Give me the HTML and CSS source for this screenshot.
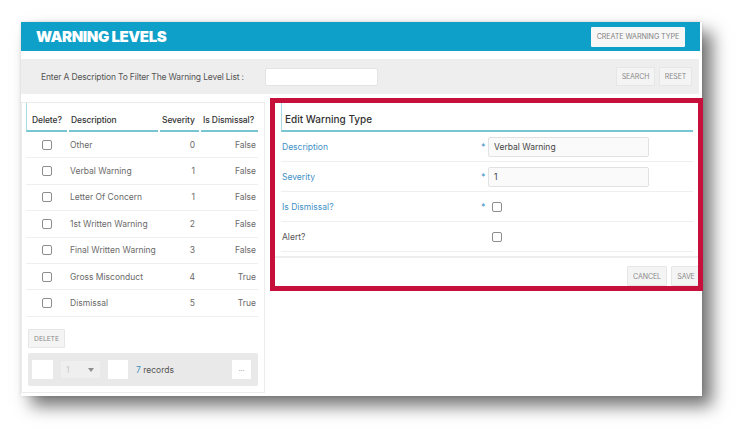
FILE: index.html
```html
<!DOCTYPE html>
<html lang="en">
<head>
<meta charset="utf-8">
<title>Warning Levels</title>
<link rel="stylesheet" href="styles.css">
</head>
<body>
<div class="card">
  <header class="topbar">
    <h1 class="title">WARNING LEVELS</h1>
    <button class="btn btn-create">CREATE WARNING TYPE</button>
  </header>

  <div class="filter">
    <label class="filter-label">Enter A Description To Filter The Warning Level List :</label>
    <input class="filter-input" type="text">
    <div class="filter-actions">
      <button class="btn btn-search">SEARCH</button>
      <button class="btn btn-reset">RESET</button>
    </div>
  </div>

  <div class="main">
    <section class="list-panel">
      <div class="grid">
        <div class="th th-first">Delete?</div>
        <div class="th">Description</div>
        <div class="th">Severity</div>
        <div class="th">Is Dismissal?</div>

        <div class="td td-cb"><input type="checkbox" class="cb"></div>
        <div class="td td-desc">Other</div>
        <div class="td td-num">0</div>
        <div class="td td-bool">False</div>

        <div class="td td-cb"><input type="checkbox" class="cb"></div>
        <div class="td td-desc">Verbal Warning</div>
        <div class="td td-num">1</div>
        <div class="td td-bool">False</div>

        <div class="td td-cb"><input type="checkbox" class="cb"></div>
        <div class="td td-desc">Letter Of Concern</div>
        <div class="td td-num">1</div>
        <div class="td td-bool">False</div>

        <div class="td td-cb"><input type="checkbox" class="cb"></div>
        <div class="td td-desc">1st Written Warning</div>
        <div class="td td-num">2</div>
        <div class="td td-bool">False</div>

        <div class="td td-cb"><input type="checkbox" class="cb"></div>
        <div class="td td-desc">Final Written Warning</div>
        <div class="td td-num">3</div>
        <div class="td td-bool">False</div>

        <div class="td td-cb"><input type="checkbox" class="cb"></div>
        <div class="td td-desc">Gross Misconduct</div>
        <div class="td td-num">4</div>
        <div class="td td-bool">True</div>

        <div class="td td-cb"><input type="checkbox" class="cb"></div>
        <div class="td td-desc">Dismissal</div>
        <div class="td td-num">5</div>
        <div class="td td-bool">True</div>
      </div>

      <button class="btn btn-delete">DELETE</button>

      <div class="pager">
        <span class="pg-box"></span>
        <span class="pg-select"><span class="pg-val">1</span><span class="pg-arrow"></span></span>
        <span class="pg-box pg-box2"></span>
        <span class="pg-count"><span class="pg-num">7</span> records</span>
        <span class="pg-more">...</span>
      </div>
    </section>

    <section class="edit-panel">
      <div class="edit-title">Edit Warning Type</div>
      <div class="form-row">
        <span class="f-label f-req">Description</span>
        <span class="f-star">*</span>
        <span class="f-ctrl"><input class="f-input" type="text" value="Verbal Warning"></span>
      </div>
      <div class="form-row">
        <span class="f-label f-req">Severity</span>
        <span class="f-star">*</span>
        <span class="f-ctrl"><input class="f-input" type="text" value="1"></span>
      </div>
      <div class="form-row">
        <span class="f-label f-req">Is Dismissal?</span>
        <span class="f-star">*</span>
        <span class="f-ctrl"><input type="checkbox" class="cb f-cb"></span>
      </div>
      <div class="form-row">
        <span class="f-label">Alert?</span>
        <span class="f-star"></span>
        <span class="f-ctrl"><input type="checkbox" class="cb f-cb"></span>
      </div>
      <div class="edit-footer">
        <button class="btn btn-cancel">CANCEL</button>
        <button class="btn btn-save">SAVE</button>
      </div>
    </section>
  </div>

  <div class="highlight"></div>
</div>
</body>
</html>
```

FILE: styles.css
```css
* { box-sizing: border-box; }

html, body {
  margin: 0;
  padding: 0;
  background: #ffffff;
}

body {
  font-family: "Inter", "Liberation Sans", sans-serif;
  font-size: 8.5px;
  color: #555;
  overflow: hidden;
  width: 744px;
  height: 438px;
}

.card {
  position: relative;
  margin: 22px 0 0 21px;
  width: 681px;
  height: 374px;
  background: #ffffff;
  box-shadow: 10px 10px 16px rgba(0, 0, 0, 0.55), 0 0 3px rgba(0, 0, 0, 0.12);
}

/* ---------- top bar ---------- */
.topbar {
  display: flex;
  align-items: center;
  justify-content: space-between;
  height: 29px;
  margin-right: 2px;
  padding: 0 15px 0 15px;
  background: #0ea0c8;
}

.title {
  margin: 0;
  font-family: "Inter", "Liberation Sans", sans-serif;
  font-weight: 900;
  font-size: 15px;
  letter-spacing: -0.4px;
  color: #ffffff;
}

.btn {
  font-family: "Inter", "Liberation Sans", sans-serif;
  font-size: 7px;
  color: #8a8a8a;
  background: #f4f4f4;
  border: 1px solid #e6e6e6;
  border-radius: 1px;
  padding: 0;
  margin: 0;
  height: 19px;
  display: inline-flex;
  align-items: center;
  justify-content: center;
  letter-spacing: -0.1px;
}

.btn-create {
  width: 94px;
  height: 20px;
  background: #f7f7f7;
  border: none;
  font-size: 7.2px;
  color: #858585;
}

/* ---------- filter ---------- */
.filter {
  display: flex;
  align-items: center;
  height: 35px;
  margin: 8px 3px 0 0;
  padding: 0 7px 0 20px;
  background: #eeeeee;
}

.filter-label {
  width: 224px;
  flex: none;
  font-size: 8.5px;
  color: #555;
  white-space: nowrap;
  letter-spacing: -0.15px;
}

.filter-input {
  width: 113px;
  height: 18px;
  margin: 0;
  border: 1px solid #e4e4e4;
  border-radius: 2px;
  background: #fff;
}

.filter-actions {
  margin-left: auto;
  display: flex;
  gap: 4px;
}

.btn-search { width: 39px; }
.btn-reset { width: 33px; }

/* ---------- main ---------- */
.main {
  display: flex;
  margin-top: 8px;
  gap: 5px;
}

.list-panel {
  width: 244px;
  height: 291px;
  border: 1px solid #ececec;
  padding: 0 6px 6px 4px;
  display: flex;
  flex-direction: column;
  align-items: flex-start;
}

.grid {
  display: grid;
  grid-template-columns: 41px 91px 41px 59px;
  grid-template-rows: 29px repeat(7, 26.4px);
  width: 232px;
}

.th {
  height: 29px;
  padding: 6px 0 0 2px;
  display: flex;
  align-items: center;
  font-size: 8.5px;
  font-weight: 500;
  color: #333;
  border-bottom: 2px solid #79c6d3;
  white-space: nowrap;
  letter-spacing: -0.1px;
}

.th + .th { margin-left: 2px; }

.th-first {
  border-left: 1px solid #a6dbe4;
  padding-left: 5px;
}

.td {
  display: flex;
  align-items: center;
  border-bottom: 1px solid #efefef;
  color: #6a6a6a;
  font-size: 8.5px;
  white-space: nowrap;
}

.td-cb { justify-content: center; padding-left: 1px; }
.td-desc { padding-left: 3px; }
.td-num { justify-content: flex-end; padding-right: 4px; }
.td-bool { justify-content: flex-end; padding-right: 2px; }

.cb {
  appearance: none;
  -webkit-appearance: none;
  width: 10px;
  height: 10px;
  margin: 0;
  border: 1px solid #8d8d8d;
  border-radius: 2px;
  background: #fff;
}

.btn-delete {
  margin: 12px 0 0 2px;
  width: 37px;
  height: 20px;
  font-size: 6.8px;
}

.pager {
  margin: 5px 0 0 2px;
  width: 230px;
  height: 33px;
  background: #e9e9e9;
  border-radius: 2px;
  display: flex;
  align-items: center;
  padding: 0 7px 0 4px;
}

.pg-box {
  width: 21px;
  height: 19px;
  background: #fff;
  flex: none;
}

.pg-select {
  margin-left: 8px;
  width: 39px;
  height: 17px;
  background: #efefef;
  display: flex;
  align-items: center;
  padding: 0 5px;
  justify-content: space-between;
}

.pg-val { color: #c9c9c9; font-size: 8.5px; }

.pg-arrow {
  width: 0;
  height: 0;
  border-left: 3px solid transparent;
  border-right: 3px solid transparent;
  border-top: 4px solid #8e8e8e;
  margin-right: 1px;
}

.pg-box2 { margin-left: 8px; width: 20px; }

.pg-count {
  margin-left: 8px;
  color: #555;
  font-size: 8.5px;
}

.pg-num { color: #3a8fb8; }

.pg-more {
  margin-left: auto;
  width: 19px;
  height: 19px;
  background: #fff;
  border-radius: 1px;
  color: #999;
  font-size: 7px;
  display: flex;
  align-items: center;
  justify-content: center;
  padding-bottom: 2px;
}

/* ---------- edit panel ---------- */
.edit-panel {
  flex: 1;
  padding-top: 1px;
}

.edit-title {
  margin: 0 9px 0 11px;
  height: 29px;
  padding: 5px 0 0 3px;
  display: flex;
  align-items: center;
  font-size: 10px;
  font-weight: 500;
  color: #333;
  border-left: 1px solid #a6dbe4;
  border-bottom: 2px solid #79c6d3;
}

.form-row {
  margin: 0 9px 0 11px;
  height: 30px;
  display: grid;
  grid-template-columns: 199px 8px 1fr;
  align-items: center;
  border-bottom: 1px solid #efefef;
}

.f-label {
  padding-left: 1px;
  color: #555;
  font-size: 8.5px;
}

.f-req { color: #3f91c6; }

.f-star {
  color: #3f91c6;
  font-size: 9px;
  padding-left: 1px;
}

.f-ctrl { display: flex; align-items: center; }

.f-input {
  width: 161px;
  height: 20px;
  margin: 0;
  padding: 0 5px;
  border: 1px solid #e2e2e2;
  border-radius: 2px;
  background: #fafafa;
  font-family: "Inter", "Liberation Sans", sans-serif;
  font-size: 8.5px;
  color: #444;
}

.f-cb { margin-left: 4px; }

.edit-footer {
  margin-top: 4px;
  border-top: 2px solid #eeeeee;
  padding: 8px 1px 0 0;
  display: flex;
  justify-content: flex-end;
  gap: 4px;
}

.btn-cancel { width: 40px; height: 20px; }
.btn-save { width: 30px; height: 20px; }

/* ---------- annotation overlay ---------- */
.highlight {
  position: absolute;
  left: 249px;
  top: 76px;
  width: 433px;
  height: 193px;
  border: 5px solid #c70f3b;
  pointer-events: none;
}
```
